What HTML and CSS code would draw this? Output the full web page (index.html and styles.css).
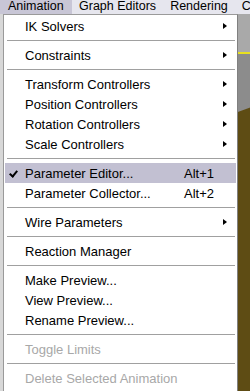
FILE: index.html
```html
<!DOCTYPE html>
<html lang="en">
<head>
    <meta charset="UTF-8">
    <title>Animation menu</title>
    <link rel="stylesheet" href="styles.css">
</head>
<body>
    <div class="menubar">
        <div class="menubar-item active">Animation</div>
        <div class="menubar-item">Graph Editors</div>
        <div class="menubar-item">Rendering</div>
        <div class="menubar-item">C</div>
    </div>
    <div class="workspace">
        <div class="left-strip"></div>
        <div class="menu">
            <div class="item sub">IK Solvers</div>
            <div class="sep"></div>
            <div class="item sub">Constraints</div>
            <div class="sep"></div>
            <div class="item sub">Transform Controllers</div>
            <div class="item sub">Position Controllers</div>
            <div class="item sub">Rotation Controllers</div>
            <div class="item sub">Scale Controllers</div>
            <div class="sep"></div>
            <div class="item checked hover">Parameter Editor...<span class="key">Alt+1</span></div>
            <div class="item">Parameter Collector...<span class="key">Alt+2</span></div>
            <div class="sep"></div>
            <div class="item sub">Wire Parameters</div>
            <div class="sep"></div>
            <div class="item">Reaction Manager</div>
            <div class="sep"></div>
            <div class="item">Make Preview...</div>
            <div class="item">View Preview...</div>
            <div class="item">Rename Preview...</div>
            <div class="sep"></div>
            <div class="item disabled">Toggle Limits</div>
            <div class="sep"></div>
            <div class="item disabled">Delete Selected Animation</div>
        </div>
        <div class="viewport">
            <div class="vp-top"></div>
            <div class="vp-line"></div>
            <div class="vp-mid"></div>
            <div class="vp-bottom"></div>
        </div>
    </div>
</body>
</html>
```

FILE: styles.css
```css
body {
    margin: 0;
    width: 250px;
    height: 391px;
    overflow: hidden;
    font-family: Tahoma, 'Liberation Sans', Arial, sans-serif;
    font-size: 13px;
    background-color: #ffffff;
}
.menubar {
    display: flex;
    height: 14px;
    background-color: #e6e6ee;
    font-size: 12.5px;
    line-height: 13px;
    white-space: nowrap;
    overflow: hidden;
}
.menubar-item {
    flex-shrink: 0;
    padding: 0 7px 0 7px;
    color: #000;
}
.menubar-item.active {
    background-color: #c8c6d6;
    padding-left: 8px;
    width: 57px;
}
.workspace {
    display: flex;
    height: 377px;
}
.left-strip {
    width: 3px;
    background-color: #d8d8d8;
}
.menu {
    width: 232px;
    border-left: 1px solid #9a9a9a;
    border-top: 1px solid #9a9a9a;
    border-right: 1px solid #808080;
    background-color: #ffffff;
    padding: 1px 0 0 1px;
}
.item {
    position: relative;
    height: 20px;
    line-height: 21px;
    padding-left: 20px;
    color: #000;
    white-space: nowrap;
}
.item.hover {
    background-color: #c2c0d2;
    margin-right: 1px;
}
.item.disabled {
    color: #a8a8a8;
}
.item.checked::before {
    content: '';
    position: absolute;
    left: 6px;
    top: 6px;
    width: 3px;
    height: 6px;
    border-right: 2px solid #000;
    border-bottom: 2px solid #000;
    transform: rotate(40deg);
}
.item.sub::after {
    content: '';
    position: absolute;
    right: 10px;
    top: 7px;
    border-left: 4px solid #000;
    border-top: 3.5px solid transparent;
    border-bottom: 3.5px solid transparent;
}
.key {
    position: absolute;
    left: 179px;
}
.sep {
    height: 1px;
    margin: 4px 2px 4px 2px;
    background-color: #a0a0a0;
}
.viewport {
    flex: 1;
    display: flex;
    flex-direction: column;
}
.vp-top {
    height: 38px;
    background-color: #a9a9a9;
}
.vp-line {
    height: 2px;
    background-color: #e8e020;
}
.vp-mid {
    height: 100px;
    background: linear-gradient(160deg, #8c8c8c 55%, #5e4c14 56%);
}
.vp-bottom {
    flex: 1;
    background-color: #5e4c14;
}
```
